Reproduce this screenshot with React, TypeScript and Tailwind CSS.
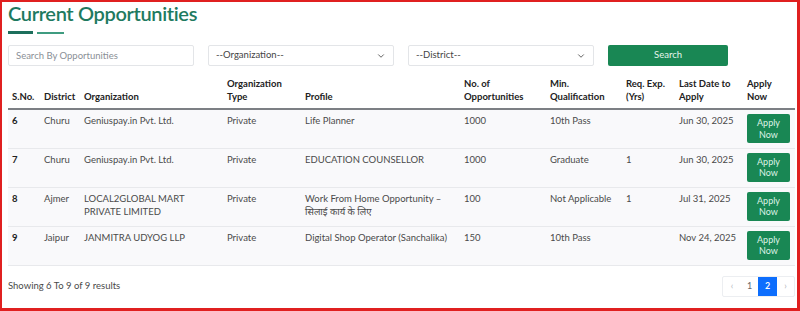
import { ChevronDown } from 'lucide-react';

const rows = [
  {
    sn: '6',
    district: 'Churu',
    org: ['Geniuspay.in Pvt. Ltd.'],
    type: 'Private',
    profile: ['Life Planner'],
    count: '1000',
    qual: '10th Pass',
    exp: '',
    date: 'Jun 30, 2025',
  },
  {
    sn: '7',
    district: 'Churu',
    org: ['Geniuspay.in Pvt. Ltd.'],
    type: 'Private',
    profile: ['EDUCATION COUNSELLOR'],
    count: '1000',
    qual: 'Graduate',
    exp: '1',
    date: 'Jun 30, 2025',
  },
  {
    sn: '8',
    district: 'Ajmer',
    org: ['LOCAL2GLOBAL MART', 'PRIVATE LIMITED'],
    type: 'Private',
    profile: ['Work From Home Opportunity –', 'सिलाई कार्य के लिए'],
    count: '100',
    qual: 'Not Applicable',
    exp: '1',
    date: 'Jul 31, 2025',
  },
  {
    sn: '9',
    district: 'Jaipur',
    org: ['JANMITRA UDYOG LLP'],
    type: 'Private',
    profile: ['Digital Shop Operator (Sanchalika)'],
    count: '150',
    qual: '10th Pass',
    exp: '',
    date: 'Nov 24, 2025',
  },
];

const widths = [32, 40, 143, 78, 159, 86, 76, 53, 68, 52];

export default function App() {
  return (
    <div
      className="h-[311px] w-[800px] overflow-hidden border-2 border-r-[3px] border-b-[3px] border-[#e02020] bg-white"
      style={{ fontFamily: 'Lato, "Noto Sans", "Noto Sans Devanagari", sans-serif' }}
    >
      {/* Heading */}
      <div className="pl-[6px]">
        <h1 className="text-[20px] font-semibold leading-[22px] tracking-[-0.35px] text-[#1e7a5f]">
          Current Opportunities
        </h1>
        <div className="mt-[7px] flex items-center gap-[4px]">
          <span className="h-[3px] w-[25px] bg-[#1d6f5c]" />
          <span className="h-[2px] w-[27px] bg-[#3f9c80]" />
        </div>
      </div>

      {/* Filters */}
      <div className="mt-[11px] grid grid-cols-[186px_186px_186px_120px] gap-x-[14px] pl-[6px]">
        <input
          placeholder="Search By Opportunities"
          className="h-[21px] rounded-[2px] border border-[#e3e5e8] px-[7px] text-[9.5px] text-[#555] placeholder:text-[#8a8f96] focus:outline-none"
        />
        <div className="flex h-[21px] items-center justify-between rounded-[2px] border border-[#e3e5e8] pl-[7px] pr-[7px] text-[9.5px] text-[#444]">
          <span>--Organization--</span>
          <ChevronDown className="h-[10px] w-[10px] text-[#555]" strokeWidth={2.2} />
        </div>
        <div className="flex h-[21px] items-center justify-between rounded-[2px] border border-[#e3e5e8] pl-[7px] pr-[7px] text-[9.5px] text-[#444]">
          <span>--District--</span>
          <ChevronDown className="h-[10px] w-[10px] text-[#555]" strokeWidth={2.2} />
        </div>
        <button className="h-[21px] rounded-[2px] bg-[#198754] text-[9.5px] text-[#e6f5ec]">
          Search
        </button>
      </div>

      {/* Table */}
      <table className="mt-[11px] ml-[6px] table-fixed border-collapse text-[9.5px] text-[#4a4a4a]">
        <colgroup>
          {widths.map((w, i) => (
            <col key={i} style={{ width: w }} />
          ))}
        </colgroup>
        <thead>
          <tr className="border-b-2 border-[#7c7f84] text-left align-bottom font-bold text-[#222]">
            <th className="px-[4px] pb-[5px] leading-[13px]">S.No.</th>
            <th className="px-[4px] pb-[5px] leading-[13px]">District</th>
            <th className="px-[4px] pb-[5px] leading-[13px]">Organization</th>
            <th className="px-[4px] pb-[5px] leading-[13px]">
              Organization
              <br />
              Type
            </th>
            <th className="px-[4px] pb-[5px] leading-[13px]">Profile</th>
            <th className="px-[4px] pb-[5px] leading-[13px]">
              No. of
              <br />
              Opportunities
            </th>
            <th className="px-[4px] pb-[5px] leading-[13px]">
              Min.
              <br />
              Qualification
            </th>
            <th className="px-[4px] pb-[5px] leading-[13px]">
              Req. Exp.
              <br />
              (Yrs)
            </th>
            <th className="px-[4px] pb-[5px] leading-[13px]">
              Last Date to
              <br />
              Apply
            </th>
            <th className="px-[4px] pb-[5px] leading-[13px]">
              Apply
              <br />
              Now
            </th>
          </tr>
        </thead>
        <tbody className="bg-[#f9f9fb]">
          {rows.map((r) => (
            <tr key={r.sn} className="h-[39px] border-b border-[#e8e9ec] align-top">
              <td className="px-[4px] pt-[4px] leading-[13px] font-bold text-[#222]">{r.sn}</td>
              <td className="px-[4px] pt-[4px] leading-[13px]">{r.district}</td>
              <td className="px-[4px] pt-[4px] leading-[13px]">
                {r.org.map((l) => (
                  <div key={l}>{l}</div>
                ))}
              </td>
              <td className="px-[4px] pt-[4px] leading-[13px]">{r.type}</td>
              <td className="px-[4px] pt-[4px] leading-[13px]">
                {r.profile.map((l) => (
                  <div key={l} className="whitespace-nowrap">
                    {l}
                  </div>
                ))}
              </td>
              <td className="px-[4px] pt-[4px] leading-[13px]">{r.count}</td>
              <td className="px-[4px] pt-[4px] leading-[13px]">{r.qual}</td>
              <td className="px-[4px] pt-[4px] leading-[13px]">{r.exp}</td>
              <td className="px-[4px] pt-[4px] leading-[13px]">{r.date}</td>
              <td className="px-[4px] pt-[4px]">
                <button className="h-[29px] w-[43px] rounded-[2px] bg-[#198754] text-[9px] leading-[11.5px] text-[#dff3e7]">
                  Apply
                  <br />
                  Now
                </button>
              </td>
            </tr>
          ))}
        </tbody>
      </table>

      {/* Footer */}
      <div className="mt-[10px] flex items-center justify-between pl-[6px] pr-[2px]">
        <span className="text-[9.5px] text-[#4a4a4a]">Showing 6 To 9 of 9 results</span>
        <div className="flex h-[21px] items-stretch rounded-[2px] border border-[#eceef1] text-[9px]">
          <span className="flex w-[18px] items-center justify-center text-[#b0b4ba]">‹</span>
          <span className="flex w-[17px] items-center justify-center text-[#666]">1</span>
          <span className="flex w-[19px] items-center justify-center bg-[#0d6efd] font-semibold text-white">
            2
          </span>
          <span className="flex w-[17px] items-center justify-center text-[#b0b4ba]">›</span>
        </div>
      </div>
    </div>
  );
}
